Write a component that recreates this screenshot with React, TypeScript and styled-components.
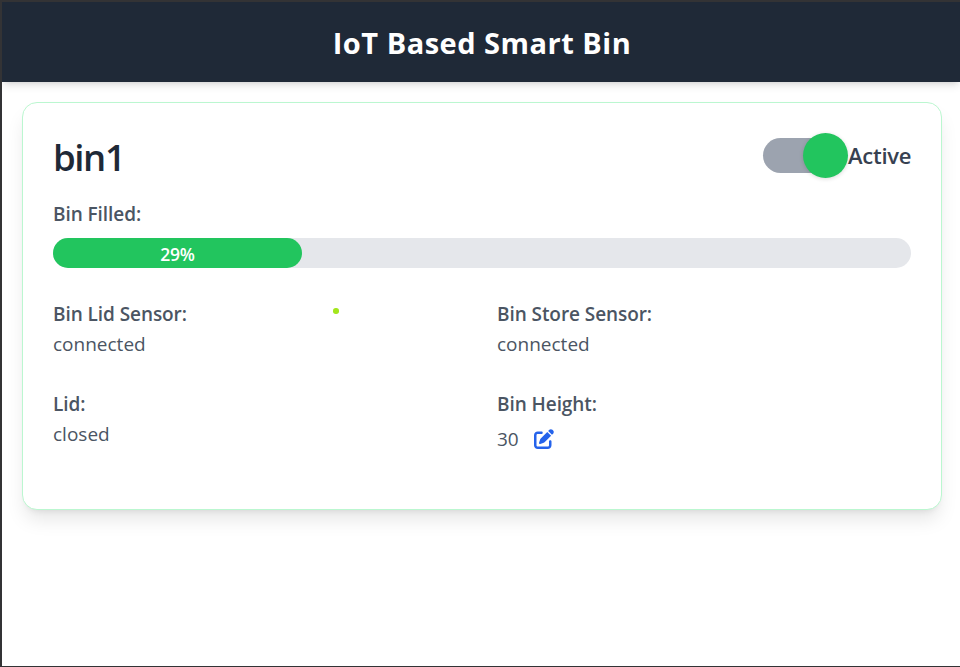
import React from "react";
import styled, { createGlobalStyle } from "styled-components";
import { FaPenToSquare } from "react-icons/fa6";

const GlobalStyle = createGlobalStyle`
  *, *::before, *::after { box-sizing: border-box; }
  body { margin: 0; background: #fff; overflow: hidden; }
`;

const Window = styled.div`
  width: 960px;
  height: 667px;
  border: solid #333335;
  border-width: 2px 0 1px 2px;
  background: #fff;
  overflow: hidden;
  position: relative;
  font-family: "Segoe UI", "Open Sans", "Noto Sans", sans-serif;
  color: #4b5563;
`;

const Header = styled.header`
  height: 80px;
  display: flex;
  align-items: center;
  justify-content: center;
  background: #1f2937;
  box-shadow: 0 5px 7.5px -1px rgba(0, 0, 0, 0.1), 0 2.5px 5px -2.5px rgba(0, 0, 0, 0.1);
`;

const Title = styled.h1`
  margin: 0;
  padding-top: 2px;
  padding-left: 2px;
  font-size: 29px;
  line-height: 40px;
  font-weight: 700;
  letter-spacing: 0.5px;
  color: #fff;
`;

const Card = styled.main`
  margin: 20px 18px 0 20px;
  height: 408px;
  padding: 29px 30px;
  border: 1.25px solid #bbf7d0;
  border-radius: 15px;
  background: #fff;
  box-shadow: 0 12.5px 18.75px -3.75px rgba(0, 0, 0, 0.1), 0 5px 7.5px -5px rgba(0, 0, 0, 0.1);
`;

const TopRow = styled.div`
  display: flex;
  align-items: center;
  justify-content: space-between;
  height: 46px;
`;

const BinName = styled.h2`
  margin: 0;
  padding-top: 4px;
  font-size: 36.5px;
  line-height: 46px;
  font-weight: 600;
  letter-spacing: -1.4px;
  color: #1f2937;
`;

const SwitchLabel = styled.div`
  display: flex;
  align-items: center;
  font-size: 22px;
  font-weight: 600;
  letter-spacing: -0.25px;
  color: #374151;
`;

const SwitchText = styled.span`
  width: 63px;
  white-space: nowrap;
`;

const Track = styled.div`
  display: flex;
  align-items: center;
  justify-content: flex-end;
  width: 85px;
  height: 35px;
  border-radius: 18px;
  background: linear-gradient(to right, #9ca3af 65px, transparent 65px);
`;

const Knob = styled.div`
  flex: none;
  width: 45px;
  height: 45px;
  border-radius: 50%;
  background: #22c55e;
  box-shadow: 0 1px 4px rgba(0, 0, 0, 0.15);
`;

const Label = styled.div`
  font-size: 19px;
  line-height: 30px;
  font-weight: 600;
  letter-spacing: -0.07px;
  white-space: nowrap;
`;

const Value = styled.div<{ $tall?: boolean }>`
  display: flex;
  align-items: center;
  gap: 15px;
  height: ${(p) => (p.$tall ? 40 : 30)}px;
  font-size: 19px;
  line-height: 30px;
`;

const FillSection = styled.section`
  margin-top: 21px;
`;

const Bar = styled.div`
  margin-top: 9px;
  height: 30px;
  border-radius: 15px;
  background: #e5e7eb;
`;

const BarFill = styled.div`
  height: 30px;
  padding-top: 2px;
  border-radius: 15px;
  background: #22c55e;
  color: #fff;
  font-size: 17.5px;
  line-height: 28px;
  font-weight: 600;
  letter-spacing: -0.3px;
  text-align: center;
`;

const Grid = styled.section`
  display: grid;
  grid-template-columns: 1fr 1fr;
  gap: 30px;
  margin-top: 31px;
`;

const EditButton = styled.button`
  display: flex;
  padding: 0;
  border: 0;
  background: none;
  color: #2563eb;
`;

const Marker = styled.span`
  position: absolute;
  left: 331px;
  top: 306px;
  width: 5.5px;
  height: 5.5px;
  border-radius: 50%;
  background: #a3e61c;
`;

const level = 29;

export default function App() {
  return (
    <Window>
      <GlobalStyle />
      <Header>
        <Title>IoT Based Smart Bin</Title>
      </Header>
      <Card>
        <TopRow>
          <BinName>bin1</BinName>
          <SwitchLabel>
            <Track>
              <Knob />
            </Track>
            <SwitchText>Active</SwitchText>
          </SwitchLabel>
        </TopRow>
        <FillSection>
          <Label>Bin Filled:</Label>
          <Bar>
            <BarFill style={{ width: `${level}%` }}>{level}%</BarFill>
          </Bar>
        </FillSection>
        <Grid>
          <div>
            <Label>Bin Lid Sensor:</Label>
            <Value>connected</Value>
          </div>
          <div>
            <Label>Bin Store Sensor:</Label>
            <Value>connected</Value>
          </div>
          <div>
            <Label>Lid:</Label>
            <Value>closed</Value>
          </div>
          <div>
            <Label>Bin Height:</Label>
            <Value $tall>
              <span>30</span>
              <EditButton aria-label="Edit bin height">
                <FaPenToSquare size={20} />
              </EditButton>
            </Value>
          </div>
        </Grid>
      </Card>
      <Marker />
    </Window>
  );
}
